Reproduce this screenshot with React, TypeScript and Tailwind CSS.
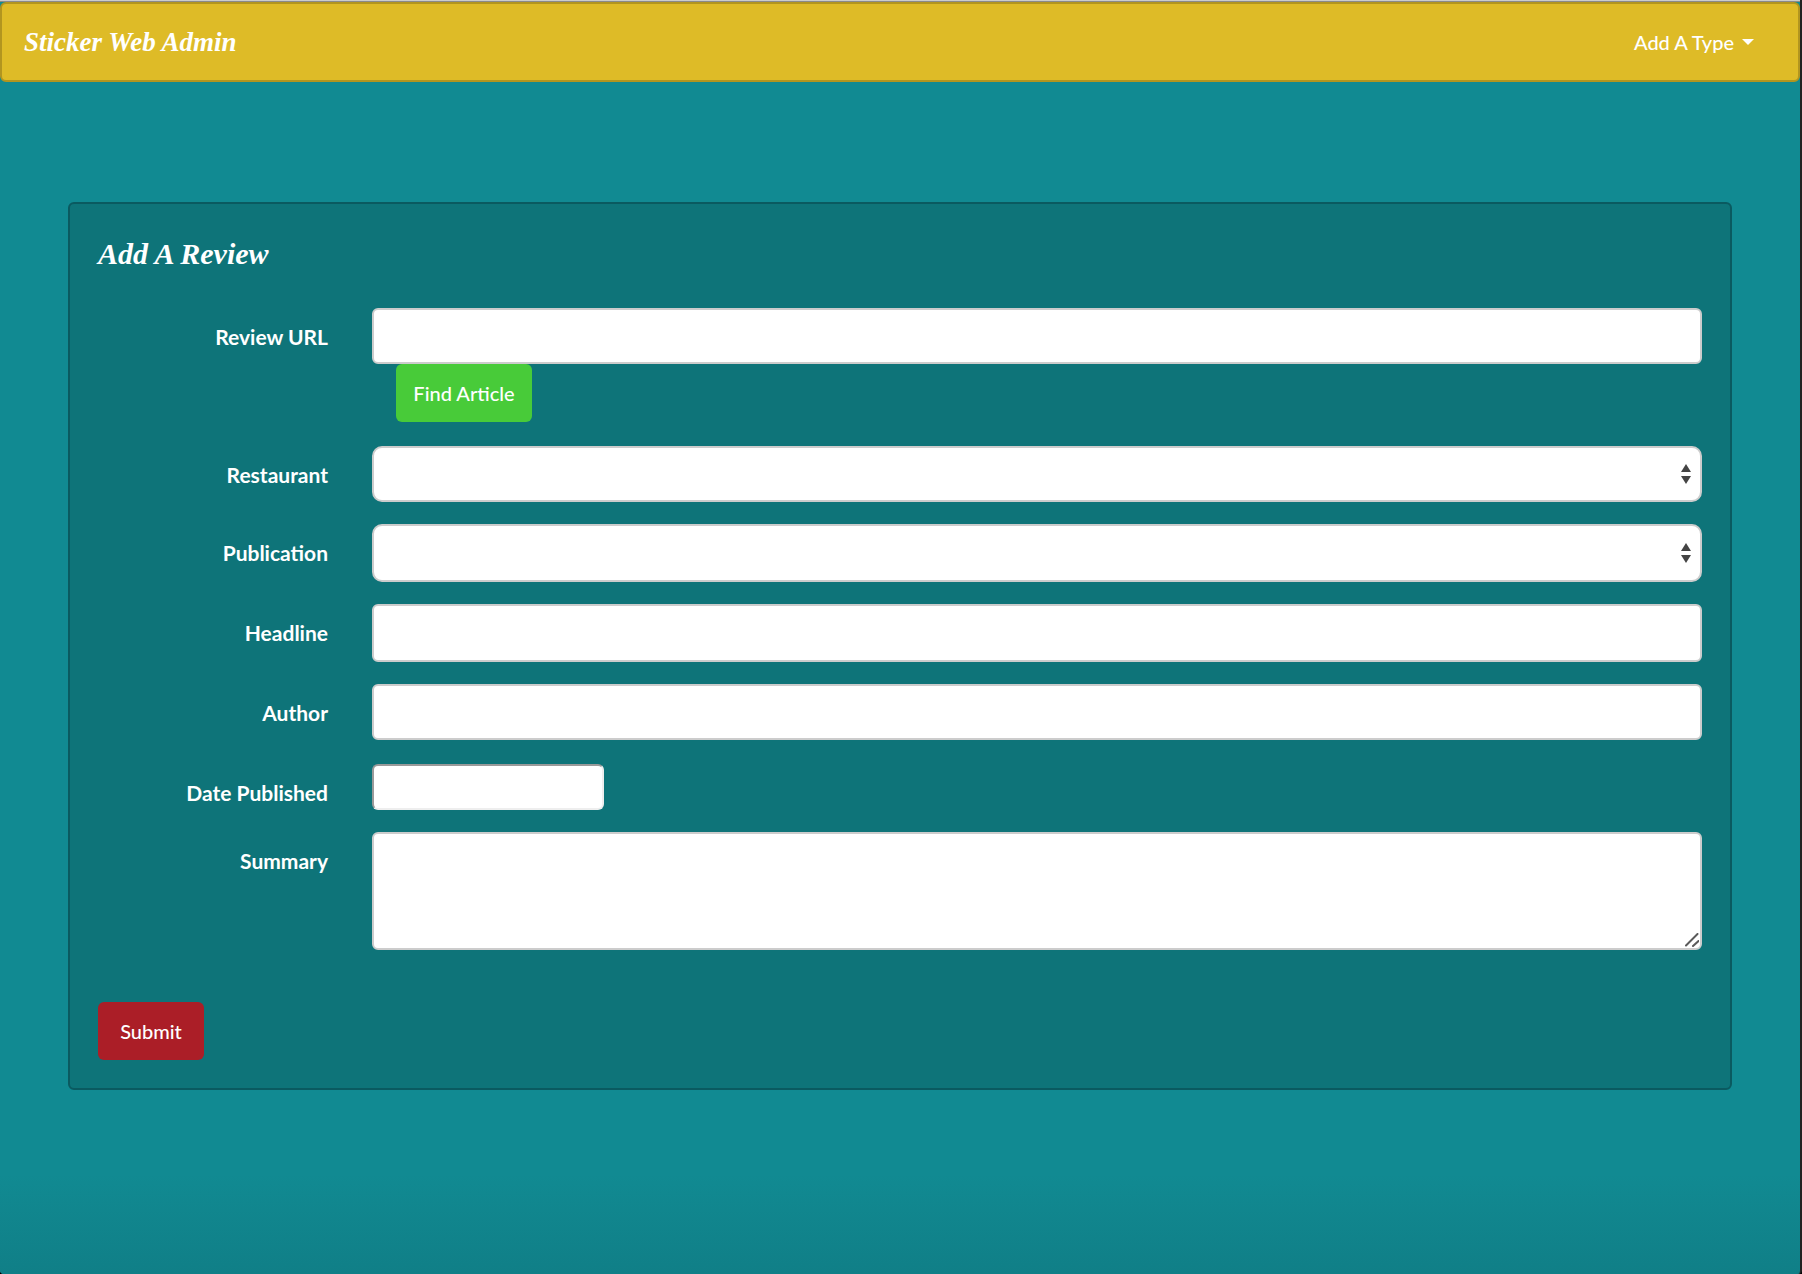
import type { ReactNode } from 'react';

const control = 'block w-full rounded-md border-2 border-[#cccccc] bg-white px-6 text-[20px] text-[#555555] outline-none';

function Row({ id, label, className, children }: { id: string; label: string; className: string; children: ReactNode }) {
  return (
    <div className={`flex items-start gap-11 ${className}`}>
      <label htmlFor={id} className="w-[230px] shrink-0 pt-4 text-right text-[21px] leading-[26px] font-bold">
        {label}
      </label>
      <div className="min-w-0 flex-1">{children}</div>
    </div>
  );
}

function SelectBox({ id, className }: { id: string; className: string }) {
  return (
    <div className="relative">
      <select
        id={id}
        defaultValue=""
        className={`block w-full appearance-none rounded-[10px] border-2 border-[#cccccc] bg-white px-6 text-[20px] text-[#555555] outline-none ${className}`}
      >
        <option value="" />
      </select>
      <svg viewBox="0 0 10 20" className="pointer-events-none absolute top-1/2 right-[11px] h-5 w-[10px] -translate-y-1/2" fill="#444444">
        <path d="M5 0 L10 8 H0 Z M0 12 H10 L5 20 Z" />
      </svg>
    </div>
  );
}

export default function App() {
  return (
    <div className="bg-black">
      <div className="flex min-h-screen flex-col rounded-b-[4px] border-r-2 border-[#222222] bg-[#118a92] bg-[linear-gradient(to_top,#107f87_0px,#118a92_100px)] font-['Lato',sans-serif] text-white">
        <div className="h-0.5 border-b border-[#8a8a8a] bg-[#cccccc]" />
        <nav className="flex h-20 items-center justify-between rounded-md border-2 border-[#b2951f] bg-[#debb27] pr-11 pl-[22px]">
          <a href="#" className="font-['Liberation_Serif',serif] text-[27px] leading-10 font-bold italic">
            Sticker Web Admin
          </a>
          <button type="button" className="flex items-center gap-2 text-[20px] leading-[26px] font-medium">
            Add A Type
            <svg viewBox="0 0 12 6" className="h-1.5 w-3" fill="currentColor">
              <path d="M0 0 H12 L6 6 Z" />
            </svg>
          </button>
        </nav>

        <main className="mx-[68px] mt-[120px] mb-[120px] rounded-md border-2 border-[#0a5a60] bg-[#0e7479] p-7">
          <h1 className="mb-8 font-['Liberation_Serif',serif] text-[30px] leading-[44px] font-bold italic">Add A Review</h1>
          <form onSubmit={(e) => e.preventDefault()}>
            <Row id="url" label="Review URL" className="mb-6">
              <input id="url" type="text" className={`${control} h-14`} />
              <button type="button" className="ml-6 block h-[58px] w-[136px] rounded-md bg-[#48cb39] text-[20px] leading-[26px] font-medium">
                Find Article
              </button>
            </Row>
            <Row id="restaurant" label="Restaurant" className="mb-[22px]">
              <SelectBox id="restaurant" className="h-14" />
            </Row>
            <Row id="publication" label="Publication" className="mb-[22px]">
              <SelectBox id="publication" className="h-[58px]" />
            </Row>
            <Row id="headline" label="Headline" className="mb-[22px]">
              <input id="headline" type="text" className={`${control} h-[58px]`} />
            </Row>
            <Row id="author" label="Author" className="mb-6">
              <input id="author" type="text" className={`${control} h-14`} />
            </Row>
            <Row id="date" label="Date Published" className="mb-[22px]">
              <input
                id="date"
                type="text"
                className="block h-[46px] w-[232px] rounded-md border-2 border-t-[#9a9a9a] border-r-[#eeeeee] border-b-[#eeeeee] border-l-[#9a9a9a] bg-white px-2 text-[20px] text-[#555555] outline-none"
              />
            </Row>
            <Row id="summary" label="Summary" className="mb-[52px]">
              <div className="relative">
                <textarea id="summary" className={`${control} h-[118px] resize-none py-3`} />
                <svg
                  viewBox="0 0 14 14"
                  className="pointer-events-none absolute right-[3px] bottom-[3px] size-[14px]"
                  fill="none"
                  stroke="#5a5a5a"
                  strokeWidth="2"
                  strokeLinecap="round"
                >
                  <path d="M1 12.5 L12.5 1 M8 13 L13.5 8" />
                </svg>
              </div>
            </Row>
            <button type="submit" className="block h-[58px] w-[106px] rounded-md bg-[#ab1e27] text-[20px] leading-[26px] font-medium">
              Submit
            </button>
          </form>
        </main>
      </div>
    </div>
  );
}
